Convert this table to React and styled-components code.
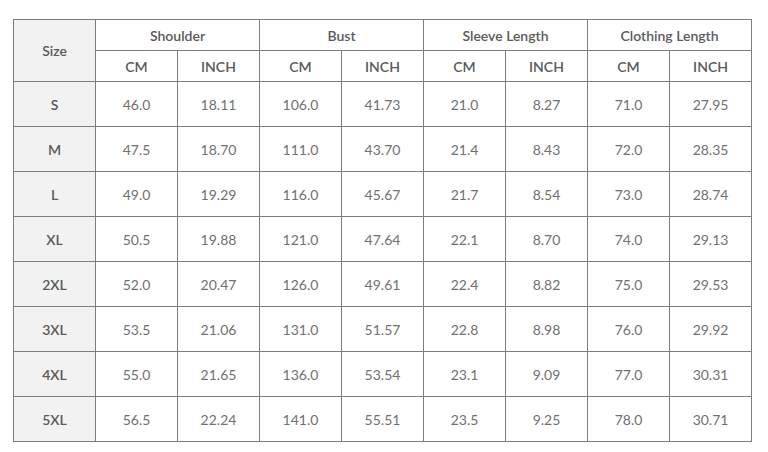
import React from "react";
import styled, { createGlobalStyle } from "styled-components";

const Global = createGlobalStyle`
  html, body { margin: 0; padding: 0; background: #fff; }
  body { font-family: Lato, "Open Sans", sans-serif; }
`;

const Page = styled.div`
  padding: 19px 0 0 13px;
`;

const Table = styled.table`
  border-collapse: collapse;
  table-layout: fixed;
  width: 739px;
`;

const Col = styled.col`
  width: 82px;
`;

const Cell = styled.td`
  border: 1px solid #7d7d7d;
  text-align: center;
  vertical-align: middle;
  padding: 0;
  height: ${(p) => (p.$head ? "30px" : "44px")};
  font-size: 14px;
  color: ${(p) => (p.$strong ? "#5a5a5a" : "#707070")};
  font-weight: ${(p) => (p.$strong ? 600 : 400)};
  background: ${(p) => (p.$shade ? "#f2f2f2" : "#fff")};
  box-sizing: content-box;
`;

const groups = ["Shoulder", "Bust", "Sleeve Length", "Clothing Length"];

const rows = [
  ["S", "46.0", "18.11", "106.0", "41.73", "21.0", "8.27", "71.0", "27.95"],
  ["M", "47.5", "18.70", "111.0", "43.70", "21.4", "8.43", "72.0", "28.35"],
  ["L", "49.0", "19.29", "116.0", "45.67", "21.7", "8.54", "73.0", "28.74"],
  ["XL", "50.5", "19.88", "121.0", "47.64", "22.1", "8.70", "74.0", "29.13"],
  ["2XL", "52.0", "20.47", "126.0", "49.61", "22.4", "8.82", "75.0", "29.53"],
  ["3XL", "53.5", "21.06", "131.0", "51.57", "22.8", "8.98", "76.0", "29.92"],
  ["4XL", "55.0", "21.65", "136.0", "53.54", "23.1", "9.09", "77.0", "30.31"],
  ["5XL", "56.5", "22.24", "141.0", "55.51", "23.5", "9.25", "78.0", "30.71"],
];

export default function App() {
  return (
    <Page>
      <Global />
      <Table>
        <colgroup>
          {Array.from({ length: 9 }).map((_, i) => (
            <Col key={i} />
          ))}
        </colgroup>
        <thead>
          <tr>
            <Cell as="th" rowSpan={2} $head $strong $shade>
              Size
            </Cell>
            {groups.map((g) => (
              <Cell as="th" key={g} colSpan={2} $head $strong>
                {g}
              </Cell>
            ))}
          </tr>
          <tr>
            {groups.map((g) => (
              <React.Fragment key={g}>
                <Cell as="th" $head $strong>CM</Cell>
                <Cell as="th" $head $strong>INCH</Cell>
              </React.Fragment>
            ))}
          </tr>
        </thead>
        <tbody>
          {rows.map((r) => (
            <tr key={r[0]}>
              <Cell $strong $shade>{r[0]}</Cell>
              {r.slice(1).map((v, i) => (
                <Cell key={i}>{v}</Cell>
              ))}
            </tr>
          ))}
        </tbody>
      </Table>
    </Page>
  );
}
